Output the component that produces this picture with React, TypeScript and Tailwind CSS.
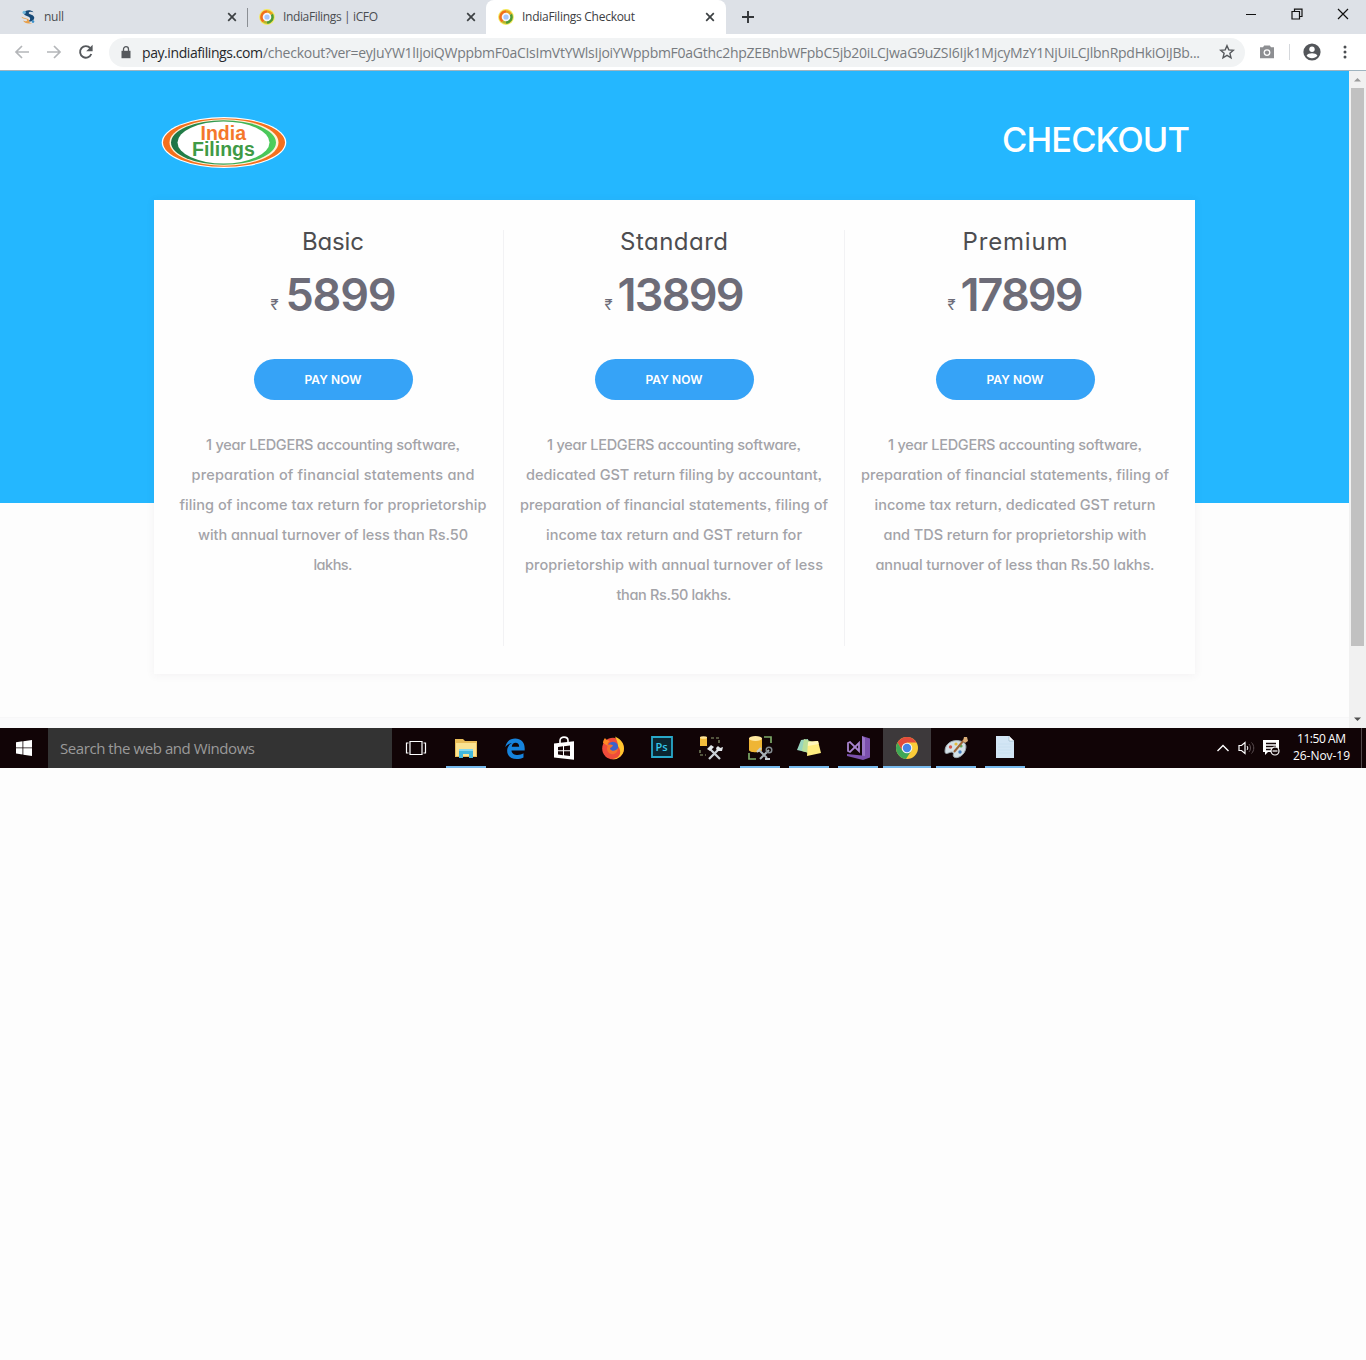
import { useLayoutEffect, useRef } from "react";
import type { ReactNode } from "react";

/* Single line of text, tracked so that it fills a given width. */
function Fit({ w, className = "", children }: { w: number; className?: string; children: string }) {
  const ref = useRef<HTMLSpanElement>(null);
  useLayoutEffect(() => {
    const el = ref.current;
    if (!el) return;
    el.style.letterSpacing = "0px";
    const natural = el.getBoundingClientRect().width;
    el.style.letterSpacing = `${(w - natural) / Math.max(1, children.length - 1)}px`;
  }, [w, children]);
  return (
    <span className={`block shrink-0 ${className}`} style={{ width: w }}>
      <span ref={ref} className="inline-block whitespace-pre">
        {children}
      </span>
    </span>
  );
}

const ui = "font-['Open_Sans','Noto_Sans',sans-serif]";
const geo = "font-[Inter,sans-serif] [font-feature-settings:'cv11'_1,'ss03'_1]";

const plans = [
  {
    name: "Basic", nameW: 62, price: "5899", priceW: 111, ml: "ml-[6px]",
    lines: [
      ["1 year LEDGERS accounting software,", 254],
      ["preparation of financial statements and", 283],
      ["filing of income tax return for proprietorship", 307],
      ["with annual turnover of less than Rs.50", 270],
      ["lakhs.", 39],
    ] as [string, number][],
  },
  {
    name: "Standard", nameW: 108, price: "13899", priceW: 127, ml: "ml-[4px]",
    lines: [
      ["1 year LEDGERS accounting software,", 254],
      ["dedicated GST return filing by accountant,", 296],
      ["preparation of financial statements, filing of", 308],
      ["income tax return and GST return for", 256],
      ["proprietorship with annual turnover of less", 298],
      ["than Rs.50 lakhs.", 115],
    ] as [string, number][],
  },
  {
    name: "Premium", nameW: 105, price: "17899", priceW: 123, ml: "ml-[4px]",
    lines: [
      ["1 year LEDGERS accounting software,", 254],
      ["preparation of financial statements, filing of", 308],
      ["income tax return, dedicated GST return", 281],
      ["and TDS return for proprietorship with", 263],
      ["annual turnover of less than Rs.50 lakhs.", 279],
    ] as [string, number][],
  },
];

function CloseX() {
  return (
    <svg width="10" height="10" viewBox="0 0 10 10" className="shrink-0">
      <path d="M1.2 1.2 8.8 8.8M8.8 1.2 1.2 8.8" stroke="#3c4043" strokeWidth="1.7" />
    </svg>
  );
}

function RingIcon() {
  return (
    <svg width="16" height="16" viewBox="0 0 16 16" className="shrink-0">
      <circle cx="8" cy="8" r="7.9" fill="#f3e95a" />
      <path d="M8 1.200A6.800 6.800 0 0 0 4 13.500L8 8Z" fill="#f0701c" />
      <path d="M8 1.200a6.800 6.800 0 0 1 6 3.600L8 8Z" fill="#e8a01d" />
      <path d="M14 4.800A6.800 6.800 0 0 1 8 14.800L8 8Z" fill="#4f9a35" />
      <path d="M8 14.800a6.800 6.800 0 0 1-4-1.300L8 8Z" fill="#b5b52c" />
      <circle cx="8" cy="8" r="4.300" fill="#f4f7ff" />
      <circle cx="8" cy="8" r="2.600" fill="#a9c8fa" />
    </svg>
  );
}

function TabStrip() {
  return (
    <div className={`flex h-[34px] w-full bg-[#dde1e7] text-[12px] ${ui}`}>
      <div className="flex h-full w-[247px] items-center pl-[20px]">
        <svg width="16" height="16" viewBox="0 0 16 16" className="shrink-0">
          <path d="M13.500 3.200C10.500.2 4.500 1 4 4.300c-.3 3 6 2.500 6.200 5.400.1 1.700-1.700 2.300-3.200 2.300 4.500 1.600 7.600-.8 7.200-3.700C13.800 5.200 8.600 5.600 8.700 3.900c.1-1.300 2.600-1.600 4.800-.7Z" fill="#174a78" />
          <path d="M1.500 7.800c.8 3 5.700 1.400 5.600 3.500-.1 1.200-2.300 1.200-4 .3 1.200 2.600 5.200 3.900 9.200 2.300-2.400.1-3.100-.5-3.100-2C9 8.800 4 9.800 1.500 7.800Z" fill="#e8a04b" />
          <circle cx="4.200" cy="3.400" r="1.700" fill="#6fb7dc" />
          <circle cx="13" cy="12.600" r="1.300" fill="#3b8fc7" />
        </svg>
        <Fit w={20} className="ml-[8px] text-[#4a4d51]">null</Fit>
        <div className="ml-auto mr-[10px] flex"><CloseX /></div>
      </div>
      <div className="mt-[8px] h-[19px] w-px bg-[#8b8f94]" />
      <div className="flex h-full w-[238px] items-center pl-[11px]">
        <RingIcon />
        <Fit w={95} className="ml-[8px] text-[#4a4d51]">IndiaFilings | iCFO</Fit>
        <div className="ml-auto mr-[10px] flex"><CloseX /></div>
      </div>
      <div className="flex h-full w-[240px] items-center rounded-t-[8px] bg-white pl-[12px]">
        <RingIcon />
        <Fit w={113} className="ml-[8px] text-[#3c4043]">IndiaFilings Checkout</Fit>
        <div className="ml-auto mr-[11px] flex"><CloseX /></div>
      </div>
      <svg width="14" height="14" viewBox="0 0 14 14" className="ml-[15px] mt-[10px]">
        <path d="M7 1v12M1 7h12" stroke="#333639" strokeWidth="1.900" />
      </svg>
      <div className="ml-auto mr-[17px] mt-[8px] flex gap-[35px]">
        <svg width="12" height="12" viewBox="0 0 12 12"><path d="M2 6.500h10" stroke="#111" /></svg>
        <svg width="12" height="12" viewBox="0 0 12 12" fill="none" stroke="#111" strokeWidth="1.200">
          <path d="M1 3.500h7.500V11H1zM3.500 3.500V1.200H11v7.300H8.500" />
        </svg>
        <svg width="12" height="12" viewBox="0 0 12 12" className="-ml-[1px]"><path d="m1 1 10 10M11 1 1 11" stroke="#111" strokeWidth="1.200" /></svg>
      </div>
    </div>
  );
}

function Toolbar() {
  return (
    <div className={`flex h-[37px] w-full items-center border-b border-[#9fb4c0] bg-white text-[14px] ${ui}`}>
      <svg width="16" height="14" viewBox="0 0 16 14" className="ml-[14px]" fill="none" stroke="#b4b6b9" strokeWidth="1.700">
        <path d="M15 7H2M8 1 2 7l6 6" />
      </svg>
      <svg width="16" height="14" viewBox="0 0 16 14" className="ml-[16px]" fill="none" stroke="#b4b6b9" strokeWidth="1.700">
        <path d="M1 7h13M8 1l6 6-6 6" />
      </svg>
      <svg width="16" height="16" viewBox="0 0 16 16" className="ml-[16px]">
        <path d="M13.300 10A5.800 5.800 0 1 1 12.300 4.100" fill="none" stroke="#55585c" strokeWidth="1.900" />
        <path d="M14.600.8v6.400H8.200Z" fill="#55585c" />
      </svg>
      <div className="ml-[15px] flex h-[29px] w-[1136px] items-center rounded-full bg-[#f1f3f4]">
        <svg width="10" height="13" viewBox="0 0 10 13" className="ml-[12px]">
          <path d="M.5 4.800h9v7.400h-9z" fill="#55585c" />
          <path d="M2.500 5V3.200a2.500 2.500 0 0 1 5 0V5" fill="none" stroke="#55585c" strokeWidth="1.300" />
        </svg>
        <Fit w={121} className="ml-[11px] text-[#26282b]">pay.indiafilings.com</Fit>
        <Fit w={937} className="text-[#777b80]">
          /checkout?ver=eyJuYW1lIjoiQWppbmF0aCIsImVtYWlsIjoiYWppbmF0aGthc2hpZEBnbWFpbC5jb20iLCJwaG9uZSI6Ijk1MjcyMzY1NjUiLCJlbnRpdHkiOiJBb...
        </Fit>
        <svg width="16" height="16" viewBox="0 0 16 16" className="ml-[19px]">
          <path d="m8 1.700 1.800 4.200 4.600.4-3.500 3 1.100 4.500L8 11.400l-4 2.400 1.100-4.500-3.500-3 4.600-.4Z" fill="none" stroke="#55585c" strokeWidth="1.400" />
        </svg>
      </div>
      <svg width="16" height="14" viewBox="0 0 16 14" className="ml-[14px]">
        <path d="M5.200.5h5.600L12 2.200h3v11H1v-11h3Z" fill="#8d8f92" />
        <circle cx="8" cy="7.600" r="3.400" fill="#fff" />
        <circle cx="8" cy="7.600" r="2.100" fill="#8d8f92" />
      </svg>
      <div className="ml-[14px] h-[16px] w-px bg-[#d5d8dc]" />
      <svg width="18" height="18" viewBox="0 0 18 18" className="ml-[13px]">
        <circle cx="9" cy="9" r="8.600" fill="#53565a" />
        <circle cx="9" cy="6.300" r="2.700" fill="#fff" />
        <path d="M3.600 12.700c1.600-3.200 9.200-3.200 10.800 0-2.400 3.300-8.400 3.300-10.800 0Z" fill="#fff" />
      </svg>
      <svg width="4" height="14" viewBox="0 0 4 14" className="ml-[22px]" fill="#4b4e52">
        <circle cx="2" cy="2" r="1.500" /><circle cx="2" cy="7" r="1.500" /><circle cx="2" cy="12" r="1.500" />
      </svg>
    </div>
  );
}

function Logo() {
  return (
    <svg width="126" height="52" viewBox="0 0 126 52">
      <defs>
        <linearGradient id="band" x1="0" x2="1"><stop offset="0" stopColor="#1d7346" /><stop offset="1" stopColor="#4fd05c" /></linearGradient>
      </defs>
      <ellipse cx="63" cy="26.500" rx="62.300" ry="25.500" fill="#fff" />
      <ellipse cx="63" cy="26.500" rx="61" ry="24.300" fill="#f4701d" />
      <ellipse cx="63" cy="26.500" rx="54.500" ry="23.300" fill="#fff3d8" />
      <ellipse cx="62.500" cy="26.500" rx="52.500" ry="22.300" fill="url(#band)" />
      <ellipse cx="62.500" cy="26.500" rx="46" ry="21" fill="#fff" />
      <text x="39.500" y="24" fontFamily="Liberation Sans" fontSize="19.500" fontWeight="700" fill="#f4772b">India</text>
      <text x="31" y="40" fontFamily="Liberation Sans" fontSize="19.500" fontWeight="700" fill="#3f9a46">Filings</text>
    </svg>
  );
}

function Plan({ plan, last }: { plan: (typeof plans)[number]; last: boolean }) {
  return (
    <div className={`flex h-[416px] w-[341px] flex-col items-center border-r ${last ? "border-transparent" : "border-[#f2f2f4]"}`}>
      <Fit w={plan.nameW} className="-mt-px h-[26px] text-[24px] leading-[26px] text-[#4d4d50]">{plan.name}</Fit>
      <div className="mt-[18px] flex h-[44px] items-start text-[#6d6c78]">
        <span className="mt-[22px] w-[10px] text-center text-[15px] leading-[20px]">₹</span>
        <Fit w={plan.priceW} className={`text-[45px] font-semibold leading-[44px] ${plan.ml}`}>{plan.price}</Fit>
      </div>
      <button className="mt-[42px] flex h-[41px] w-[159px] shrink-0 items-center justify-center rounded-full bg-[#36a3f7] text-white">
        <Fit w={57} className="text-left text-[12px] font-semibold leading-[16px]">PAY NOW</Fit>
      </button>
      <div className="mt-[30px] flex flex-col items-center text-[14.500px] font-medium leading-[30px] text-[#a3a3a8]">
        {plan.lines.map(([t, w]) => (
          <Fit key={t} w={w} className="h-[30px]">{t}</Fit>
        ))}
      </div>
    </div>
  );
}

function Task({ children, open = false, active = false, w = "w-[49px]" }: { children: ReactNode; open?: boolean; active?: boolean; w?: string }) {
  return (
    <div className={`flex h-[40px] shrink-0 flex-col items-center ${w} ${active ? "bg-[#3d393b]" : ""}`}>
      <div className="flex h-[38px] items-center pt-[2px]">{children}</div>
      <div className={`h-[2px] ${active ? "w-full" : "w-[40px]"} ${open ? "bg-[#76b9ed]" : ""}`} />
    </div>
  );
}

const ic = { width: 26, height: 26, viewBox: "0 0 26 26" };

function Taskbar() {
  return (
    <div className={`flex h-[40px] w-full items-center bg-[#110406] ${ui}`}>
      <div className="flex w-[48px] justify-center">
        <svg width="16" height="16" viewBox="0 0 16 16" fill="#fff">
          <path d="M0 2.200 6.500 1.300v6.200H0zM7.300 1.200 16 0v7.500H7.300zM0 8.300h6.500v6.200L0 13.600zM7.300 8.300H16V16l-8.700-1.300z" />
        </svg>
      </div>
      <div className="flex h-full w-[344px] items-center bg-[#333] pl-[12px]">
        <Fit w={195} className="text-[15px] text-[#9a9a9a]">Search the web and Windows</Fit>
      </div>
      <Task>
        <svg width="22" height="16" viewBox="0 0 22 16" fill="none" stroke="#fff" strokeWidth="1.200" className="mr-[2px]">
          <path d="M5 1.500h12v13H5zM3.500 3h-2v10h2M18.500 3h2v10h-2" />
        </svg>
      </Task>
      <Task open>
        <svg {...ic}>
          <path d="M2 4h8l2 2h12v16H2z" fill="#e9bd58" /><path d="M3 8h20v13H3z" fill="#fbe391" />
          <path d="M6 14h14v9h-4v-4h-6v4H6z" fill="#42b8dc" /><path d="M6 14h14v2H6z" fill="#86d9ec" />
        </svg>
      </Task>
      <Task>
        <svg {...ic} width="24" height="24">
          <path d="M2.500 12.300C3.600 5.600 8 2.700 13.200 2.700c6 0 10.300 3.800 10.300 10.500v2.500H9.200c.2 3.600 3.300 4.800 6.700 4.800 2.300 0 4.400-.6 6.300-1.700v4.600c-2.300 1.200-4.900 1.600-7.300 1.600-6 0-10.400-3.500-10.400-9.100 0-4 2.200-6.700 5.300-8.200-3 .3-5.700 2.300-7.300 4.600ZM9.500 11.700h8c0-2.800-1.500-4.300-3.800-4.300-2.400 0-3.900 1.700-4.200 4.300Z" fill="#1683dc" />
        </svg>
      </Task>
      <Task>
        <svg {...ic}>
          <path d="M9 8V5.500C9 1 17 1 17 5.500V7" fill="none" stroke="#fff" strokeWidth="1.600" />
          <path d="m3 8.500 20-2.300v18.600L3 22.500Z" fill="#fff" />
          <path d="m7 12 5-.7v4H7zM13 11.200l6-.8v4.900h-6zM7 16.200h5v4l-5-.6zM13 16.200h6v4.900l-6-.8z" fill="#160709" />
        </svg>
      </Task>
      <Task>
        <svg {...ic}>
          <circle cx="13" cy="13.500" r="10.800" fill="#ef4c3b" />
          <path d="M15 1.500c5 2.200 9 6.500 9 12a11 11 0 0 1-12 10.800c9-1 10-8 6-13 0-4-1.500-6.500-3-9.800Z" fill="#ffc62e" />
          <path d="M3 8c0-2 1-4 2-5 1 2 3 2.500 5 3-2 1-3 3-2 5Z" fill="#ff8a24" />
          <circle cx="13" cy="12" r="5.200" fill="#3d62cc" />
          <path d="M8 10c1-1 4 0 5 0-1 3-3 2-3 4 2 3 6 2 8-1 0 5-4 7-7 6-4-1-5-6-3-9Z" fill="#f6702d" />
        </svg>
      </Task>
      <Task>
        <svg width="22" height="22" viewBox="0 0 22 22" className="-mt-[2px]">
          <path d="M1 1h20v20H1z" fill="#0b2631" stroke="#29a9ca" strokeWidth="1.800" />
          <text x="4.500" y="15" fontSize="11" className="font-['Open_Sans',sans-serif] font-semibold" fill="#35c7eb">Ps</text>
        </svg>
      </Task>
      <Task>
        <svg {...ic}>
          <path d="M2 2h7v9H2z" fill="#f2bc3c" /><ellipse cx="5.500" cy="2.500" rx="3.500" ry="1.300" fill="#ffe596" />
          <path d="M2 15v5h6M13 3h8v6" fill="none" stroke="#92a174" strokeWidth="1.200" strokeDasharray="3 2" />
          <path d="m11 13 11 11M22 13 11 24" stroke="#c9d0d5" strokeWidth="2.300" /><path d="m9 14 4-4 3 2-4 4ZM20 11l2 2 3-1-1 4-5 0-1-3Z" fill="#e3e7ea" />
        </svg>
      </Task>
      <Task open>
        <svg {...ic}>
          <path d="M2 3v12c0 3 13 3 13 0V3Z" fill="#efb534" /><ellipse cx="8.500" cy="3.500" rx="6.500" ry="2.400" fill="#ffe8a0" />
          <path d="M17 2h7v6M2 18v6h7" fill="none" stroke="#7da968" strokeWidth="1.700" />
          <path d="m12 15 8 8M22 15l-9 9" stroke="#abb4b8" strokeWidth="2" />
          <circle cx="22" cy="15" r="2.800" fill="none" stroke="#858e92" strokeWidth="1.400" />
          <path d="m10 17 4-4M18 24h5" stroke="#c8cdd0" strokeWidth="2" />
        </svg>
      </Task>
      <Task open>
        <svg {...ic}>
          <path d="m5 5 7-1 2 14-13-3Z" fill="#98d5bd" /><path d="m8 4 9 3-1 12-10-3Z" fill="#b9df9a" />
          <path d="m12 7 10-1 3 12-14 3Z" fill="#ffed7e" /><path d="m12 7 10-1 .7 3-10.800 2Z" fill="#fff7ba" />
        </svg>
      </Task>
      <Task open>
        <svg {...ic}>
          <path d="m17 1 8 2.500v19L18 25 2 21v-2l15 1.500Z" fill="#7b50ad" /><path d="m17 1 3 2v18l-3-.5Z" fill="#9a76c7" />
          <path d="m3 8 2-1 9 9V8L5 17l-2-1Z" fill="none" stroke="#a985cf" strokeWidth="1.800" />
        </svg>
      </Task>
      <Task open active w="ml-px w-[48px]">
        <svg {...ic}>
          <circle cx="13" cy="13" r="11" fill="#fbcb38" />
          <path d="M3.500 7.500A11 11 0 0 1 22.500 7.500H13L8.200 15.700Z" fill="#e24b3c" />
          <path d="M3.500 7.500A11 11 0 0 0 12 24l5.500-8.500H8.200Z" fill="#3fa757" />
          <circle cx="13" cy="13" r="5.300" fill="#f6f6f6" /><circle cx="13" cy="13" r="4.200" fill="#4584e8" />
        </svg>
      </Task>
      <Task open>
        <svg {...ic}>
          <path d="M2 16C2 9 9 4 17 6c6 1 7 5 5 10-2 5-8 8-11 6-2-2 1-4-2-5-3 0-7 4-7-1Z" fill="#d3e0e6" stroke="#9daab0" />
          <circle cx="7.500" cy="12" r="1.700" fill="#d7574b" /><circle cx="13" cy="9" r="1.600" fill="#e4bc40" /><circle cx="18" cy="11" r="1.600" fill="#61a656" /><circle cx="17" cy="17" r="1.700" fill="#467fc1" />
          <path d="M11 17 21 5" stroke="#a06738" strokeWidth="2" /><path d="m20 6 1-4 3 0 1 4-3 2Z" fill="#d9ad76" />
        </svg>
      </Task>
      <Task open>
        <svg {...ic}>
          <path d="M4 1h13l5 5v17H4z" fill="#d3e6f5" /><path d="M17 1v5h5" fill="#fff" stroke="#9fbcd1" strokeWidth=".8" />
          <path d="M6 9h13M6 12h13M6 15h13M6 18h13" stroke="#c8deef" strokeWidth=".8" />
        </svg>
      </Task>
      <svg width="12" height="8" viewBox="0 0 12 8" className="ml-auto"><path d="m.5 7 5.500-5.500L11.500 7" fill="none" stroke="#fff" strokeWidth="1.400" /></svg>
      <svg width="17" height="14" viewBox="0 0 17 14" className="ml-[9px]" fill="none" stroke="#fff">
        <path d="M1 4.500h2.500L7 1.500v11l-3.500-3H1z" strokeWidth="1.200" /><path d="M9 5c1 1 1 3 0 4" /><path d="M11 3c2 2 2 6 0 8M13.500 1.500c3 3 3 8 0 11" stroke="#5b4f52" />
      </svg>
      <svg width="17" height="16" viewBox="0 0 17 16" className="ml-[8px]">
        <path d="M0 0h16v12H5l-3 3v-3H0z" fill="#fff" /><path d="M3 3.500h10M3 6.500h10M3 9.500h5" stroke="#140708" strokeWidth="1.300" />
        <circle cx="12" cy="11" r="4" fill="#140708" stroke="#fff" strokeWidth="1.200" /><path d="M9.500 11h5" stroke="#fff" strokeWidth="1.200" />
      </svg>
      <div className="-mt-[3px] ml-[13px] flex w-[57px] flex-col items-center text-[12px] leading-[17px] text-white">
        <Fit w={49}>11:50 AM</Fit>
        <Fit w={57}>26-Nov-19</Fit>
      </div>
      <div className="ml-[11px] mr-[4px] h-full w-px bg-[#51484a]" />
    </div>
  );
}

export default function App() {
  return (
    <div className="flex h-[1360px] w-[1366px] flex-col overflow-hidden bg-[#fdfdfd]">
      <TabStrip />
      <Toolbar />
      <div className="flex h-[657px]">
        <main className={`h-full w-[1349px] bg-[linear-gradient(#24b7ff_432px,#fdfdfd_432px)] ${geo}`}>
          <header className="flex h-[129px] items-start justify-between pl-[161px] pr-[159px]">
            <div className="mt-[45px]"><Logo /></div>
            <h1 className="mt-[49px] flex text-[34.500px] font-medium leading-[40px] text-white"><Fit w={188}>CHECKOUT</Fit></h1>
          </header>
          <section className="ml-[154px] flex h-[474px] w-[1041px] bg-[#fefefe] pl-[9px] pt-[30px] shadow-[0_1px_8px_1px_rgba(69,65,78,0.05)]">
            {plans.map((p, i) => <Plan key={p.name} plan={p} last={i === 2} />)}
          </section>
          <div className="mt-[43px] h-[11px] border-t border-[#f7f7f8] bg-[#fafafb]" />
        </main>
        <div className="flex w-[17px] flex-col items-center bg-[#f1f1f1]">
          <svg width="17" height="17" viewBox="0 0 17 17"><path d="M5 10.500h7L8.500 7z" fill="#9b9b9b" /></svg>
          <div className="h-[558px] w-[13px] bg-[#c1c1c1]" />
          <svg width="17" height="17" viewBox="0 0 17 17" className="mt-auto"><path d="M5 6.500h7L8.500 10z" fill="#505050" /></svg>
        </div>
      </div>
      <Taskbar />
    </div>
  );
}
